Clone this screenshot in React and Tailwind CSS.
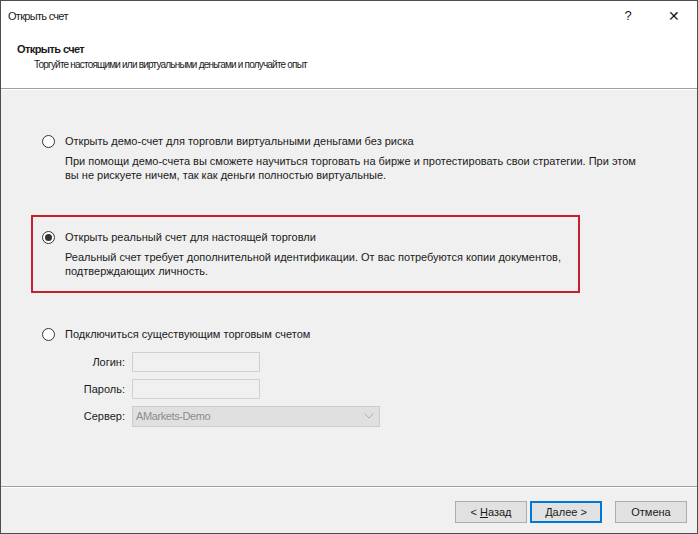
const Radio = ({ checked }) => (
  <span className="w-[13px] h-[13px] rounded-full border border-[#333] bg-white flex items-center justify-center shrink-0">
    {checked && <span className="w-[7px] h-[7px] rounded-full bg-[#333]" />}
  </span>
);

const Option = ({ checked, title, children }) => (
  <div className="flex flex-col">
    <div className="flex items-center gap-[10px] h-[16px]">
      <Radio checked={checked} />
      <span>{title}</span>
    </div>
    {children && <div className="pl-[23px] mt-[5px] leading-[14px]">{children}</div>}
  </div>
);

const Field = ({ label, children }) => (
  <div className="flex items-center h-[20px]">
    <span className="w-[131px] text-right pr-[7px]">{label}</span>
    {children}
  </div>
);

const Button = ({ children, primary }) => (
  <button
    className={
      "w-[72px] h-[22px] bg-[#e1e1e1] flex items-center justify-center text-[11px] " +
      (primary ? "border-2 border-[#0078d7]" : "border border-[#adadad]")
    }
  >
    {children}
  </button>
);

export default function App() {
  return (
    <div
      className="w-[698px] h-[534px] border border-[#4d4d4d] flex flex-col bg-[#f0f0f0] text-[#1a1a1a] overflow-hidden"
      style={{ fontFamily: "'Liberation Sans', Arial, sans-serif" }}
    >
      {/* Title bar */}
      <div className="h-[30px] bg-white flex items-center pl-[7px] shrink-0">
        <span className="text-[11px] flex-1 tracking-[-0.7px]">Открыть счет</span>
        <span className="w-[46px] text-center text-[13px]">?</span>
        <span className="w-[46px] text-center text-[14px] font-light">✕</span>
      </div>

      {/* Header */}
      <div className="h-[58px] bg-white border-b border-[#a0a0a0] shrink-0 pl-[16px] pt-[10px]">
        <div className="text-[11px] font-bold leading-[16px] tracking-[-0.6px]">Открыть счет</div>
        <div className="text-[10px] leading-[15px] pl-[17px] tracking-[-0.8px]">Торгуйте настоящими или виртуальными деньгами и получайте опыт</div>
      </div>
      <div className="h-px bg-white shrink-0" />

      {/* Body */}
      <div className="flex-1 text-[11px] pl-[41px] pt-[43px]">
        <Option title="Открыть демо-счет для торговли виртуальными деньгами без риска">
          При помощи демо-счета вы сможете научиться торговать на бирже и протестировать свои стратегии. При этом
          <br />
          вы не рискуете ничем, так как деньги полностью виртуальные.
        </Option>

        <div className="mt-[33px] -ml-[11px] w-[549px] h-[78px] border-2 border-[#c5202e] pl-[9px] pt-[12px]">
          <Option checked title="Открыть реальный счет для настоящей торговли">
            Реальный счет требует дополнительной идентификации. От вас потребуются копии документов,
            <br />
            подтверждающих личность.
          </Option>
        </div>

        <div className="mt-[33px]">
          <Option title="Подключиться существующим торговым счетом" />
          <div className="flex flex-col gap-[7px] mt-[10px] -ml-[41px]">
            <Field label="Логин:">
              <div className="w-[128px] h-[20px] bg-[#f0f0f0] border border-[#d0d0d0]" />
            </Field>
            <Field label="Пароль:">
              <div className="w-[128px] h-[20px] bg-[#f0f0f0] border border-[#d0d0d0]" />
            </Field>
            <Field label="Сервер:">
              <div className="w-[248px] h-[21px] bg-[#e0e0e0] border border-[#cccccc] flex items-center justify-between pl-[3px] pr-[5px] text-[#8c8c8c]">
                <span className="tracking-[-0.4px]">AMarkets-Demo</span>
                <svg width="10" height="6" viewBox="0 0 10 6" fill="none" stroke="#b0b0b0" strokeWidth="1">
                  <path d="M0.5 0.5 L5 5 L9.5 0.5" />
                </svg>
              </div>
            </Field>
          </div>
        </div>
      </div>

      {/* Footer */}
      <div className="h-px bg-[#a0a0a0] shrink-0" />
      <div className="h-px bg-white shrink-0" />
      <div className="h-[45px] shrink-0 flex items-start justify-end pt-[13px] pr-[10px]">
        <Button>
          &lt; <span className="underline ml-[3px]">Н</span>азад
        </Button>
        <div className="w-[3px]" />
        <Button primary>
          <span className="underline">Д</span>алее &gt;
        </Button>
        <div className="w-[13px]" />
        <Button>Отмена</Button>
      </div>
    </div>
  );
}
